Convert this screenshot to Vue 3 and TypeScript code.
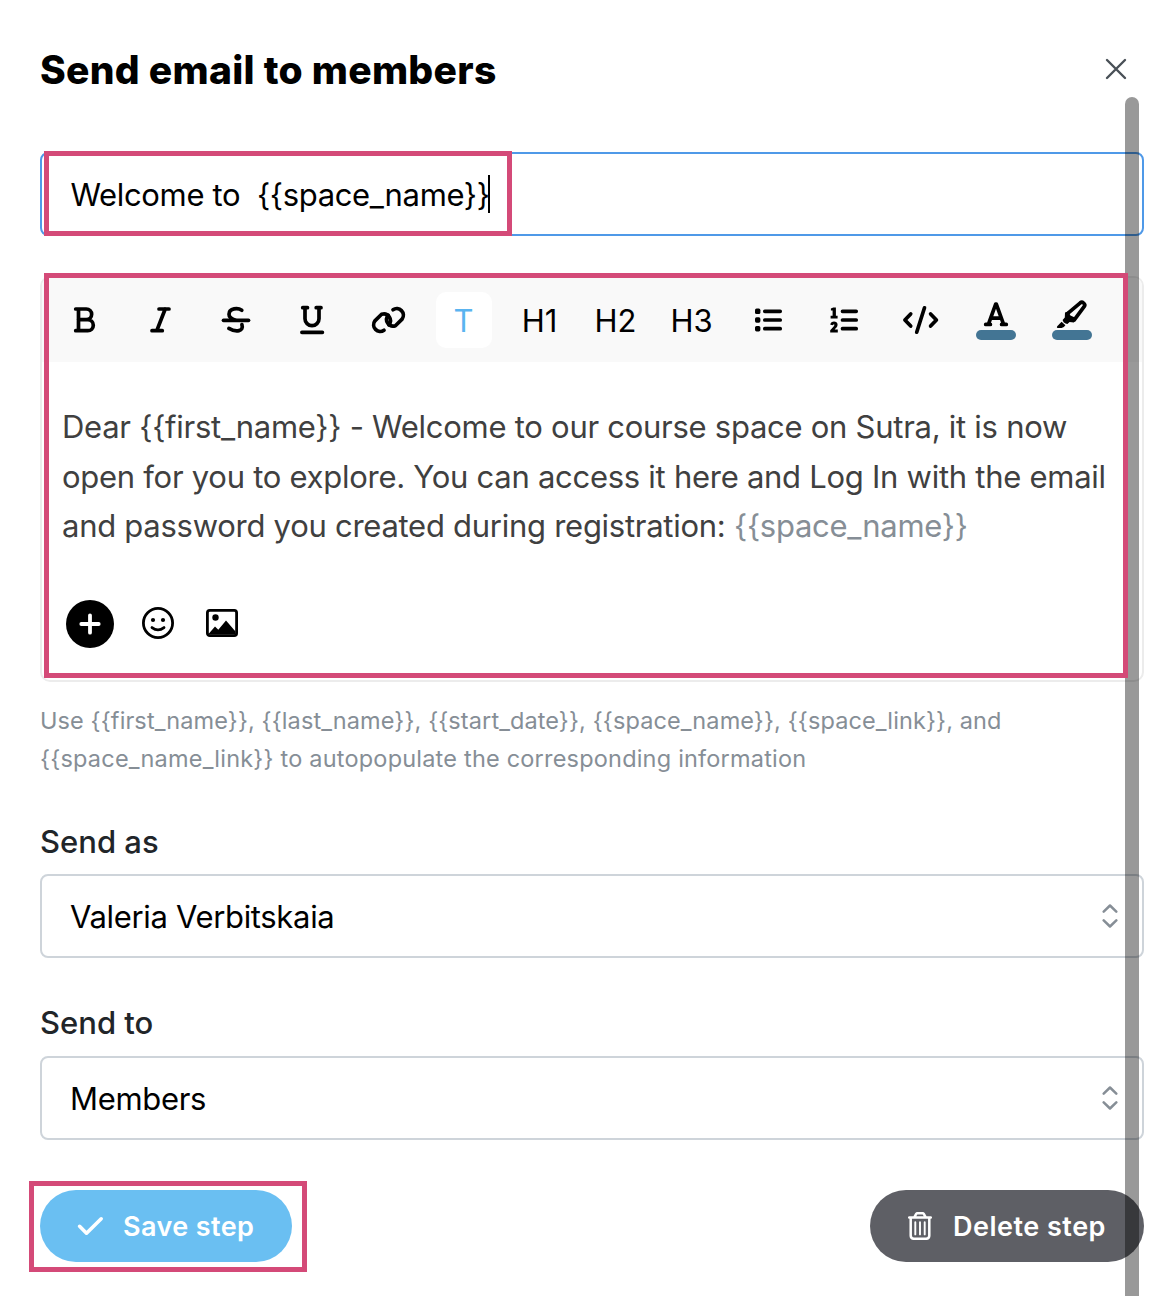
<template>
  <div class="modal">
    <header class="modal-header">
      <h1 class="title">Send email to members</h1>
      <button type="button" class="close-btn" aria-label="Close">
        <svg width="22" height="22" viewBox="0 0 22 22">
          <path d="M2 2L20 20M20 2L2 20" />
        </svg>
      </button>
    </header>

    <div class="subject">
      <span class="subject-text">{{ subject }}</span>
      <span class="caret"></span>
      <div class="frame frame-subject"></div>
    </div>

    <section class="editor">
      <div class="toolbar">
        <button
          v-for="tool in tools"
          :key="tool.name"
          type="button"
          class="tool"
          :class="{ active: tool.name === activeTool }"
          :aria-label="tool.name"
        >
          <span v-if="tool.label" class="tool-label">{{ tool.label }}</span>
          <svg v-else class="tool-icon" viewBox="0 0 56 56">
            <path v-for="(s, i) in tool.strokes" :key="'s' + i" :d="s" class="stroke" />
            <path v-for="(f, i) in tool.fills" :key="'f' + i" :d="f" class="fill" />
            <rect v-if="tool.swatch" class="swatch" x="8" y="38" width="40" height="10" rx="5" />
          </svg>
        </button>
      </div>

      <div class="content">
        <p v-for="(line, i) in bodyLines" :key="i" class="line">
          {{ line.text }}<span v-if="line.token" class="token">{{ line.token }}</span>
        </p>
      </div>

      <div class="insert">
        <button type="button" class="add-btn" aria-label="Add">
          <svg width="48" height="48" viewBox="0 0 48 48">
            <path d="M24 15.3V32.7M15.3 24H32.7" />
          </svg>
        </button>
        <svg class="insert-icon" width="32" height="32" viewBox="0 0 32 32">
          <circle class="ring" cx="16" cy="16" r="14.6" />
          <circle cx="11" cy="13" r="2.1" />
          <circle cx="21" cy="13" r="2.1" />
          <path class="ring" d="M10 20.6Q16 25.2 22 20.6" />
        </svg>
        <svg class="insert-icon" width="32" height="32" viewBox="0 0 32 32">
          <rect class="ring" x="1.4" y="3.4" width="29.2" height="25.2" rx="2.4" />
          <circle cx="9.5" cy="10.5" r="3.2" />
          <path d="M2.5 27L9 19.4L12.3 22.8L20 13.4L29.5 24.5V27.5H2.5Z" />
        </svg>
      </div>
      <div class="frame frame-editor"></div>
    </section>

    <div class="hint">
      <p v-for="(h, i) in hintLines" :key="i">{{ h }}</p>
    </div>

    <div v-for="field in fields" :key="field.label" class="field">
      <label class="field-label">{{ field.label }}</label>
      <div class="select">
        <span>{{ field.value }}</span>
        <svg width="16" height="24" viewBox="0 0 16 24">
          <path d="M1.7 7.6L8 1.5L14.3 7.6M1.7 16.4L8 22.5L14.3 16.4" />
        </svg>
      </div>
    </div>

    <footer class="actions">
      <button type="button" class="btn save">
        <svg width="28" height="24" viewBox="0 0 28 24">
          <path d="M3.6 12.3L10.5 19.2L25.2 4.8" stroke-width="3.6" />
        </svg>
        <span>Save step</span>
      </button>
      <button type="button" class="btn delete">
        <svg width="24" height="28" viewBox="0 0 24 28">
          <path d="M1.2 5.6H22.8M6.4 5.2L8.2 1.9Q8.6 1.2 9.4 1.2H14.6Q15.4 1.2 15.8 1.9L17.6 5.2M2.7 5.8V23.6Q2.7 26.8 5.9 26.8H18.1Q21.3 26.8 21.3 23.6V5.8" stroke-width="2.5" />
          <path d="M7.3 10.2V22.4M12 10.2V22.4M16.7 10.2V22.4" stroke-width="1.9" />
        </svg>
        <span>Delete step</span>
      </button>
      <div class="frame frame-save"></div>
    </footer>

    <div class="scrollbar"></div>
  </div>
</template>

<script setup lang="ts">
import { ref } from 'vue'

interface Tool {
  name: string
  label?: string
  strokes?: string[]
  fills?: string[]
  swatch?: boolean
}

const subject = ref('Welcome to  {{space_name}}')
const activeTool = ref('text')

const tools: Tool[] = [
  {
    name: 'bold',
    strokes: ['M19.7 17H30.3a5.35 5.35 0 0 1 0 10.7H22.3M30.3 27.7H31.8a5.5 5.5 0 0 1 0 11H19.7M22.5 17V38.7'],
  },
  { name: 'italic', strokes: ['M27 17H37M20 38.7H30.3M33.2 17L24.8 38.7'] },
  {
    name: 'strike',
    strokes: [
      'M33.8 18.2C30.2 15.8 21 15.8 21 22.2C21 25.2 23.6 27 27.4 28.2',
      'M33.9 32.6C36.2 39.4 28 40.6 20.9 36.4',
      'M15.5 28.3H40.5',
    ],
  },
  {
    name: 'underline',
    strokes: ['M18.7 15.7H23.5M32.2 15.7H37M21 15.7V26.7a7 7 0 0 0 14 0V15.7M17.9 40.3H38.4'],
  },
  {
    name: 'link',
    strokes: [
      'M24 38.2A6.6 6.6 0 0 1 14.9 28.9L21.6 22.3A6.6 6.6 0 0 1 28.8 32.8',
      'M33 17.8A6.6 6.6 0 0 1 42.1 27.1L35.4 33.7A6.6 6.6 0 0 1 28.2 23.2',
    ],
  },
  { name: 'text', label: 'T' },
  { name: 'heading1', label: 'H1' },
  { name: 'heading2', label: 'H2' },
  { name: 'heading3', label: 'H3' },
  {
    name: 'bullets',
    strokes: ['M24.8 19.3H40.2M24.8 28H40.2M24.8 36.7H40.2'],
    fills: [19.3, 28, 36.7].map(
      (y) => `M16.6 ${y - 2.7}h2.2a1.6 1.6 0 0 1 1.6 1.6v2.2a1.6 1.6 0 0 1 -1.6 1.6h-2.2a1.6 1.6 0 0 1 -1.6 -1.6v-2.2a1.6 1.6 0 0 1 1.6 -1.6z`
    ),
  },
  {
    name: 'numbers',
    strokes: ['M26.5 19.3H40.2M26.5 28H40.2M26.5 36.7H40.2'],
    fills: [
      'M14.9 16.6L17.2 15.4H19.9V23.8H21.6V26.4H14.6V23.8H16.6V18.6H14.9Z',
      'M14.3 32.8C14.5 28.4 21.6 28.4 21.6 32.7C21.6 34.9 19.6 36.2 18.6 37.5H21.8V40.4H14.2V38.2C16 35.9 18.4 34.2 18.4 32.9C18.4 31.8 17.2 31.9 17.1 33.2Z',
    ],
  },
  {
    name: 'code',
    strokes: ['M18.7 21.9L12.9 28L18.7 34.1M38.6 21.9L44.4 28L38.6 34.1M32.5 15.8L24.7 40.2'],
  },
  {
    name: 'color',
    strokes: ['M17.7 32.4H22.4M33.6 32.4H38.3M20.4 32.4L27.7 12.2H28.3L35.6 32.4M23 26.2H33'],
    swatch: true,
  },
  {
    name: 'highlight',
    strokes: ['M23.2 21.9L36.3 10.8Q37.8 9.6 39.4 10.9Q41.6 12.6 40.3 14.4L30.3 27.8'],
    fills: [
      'M21 20.6L24.4 19.4L26.4 23.4L32 26L31.6 28.4L29.8 30.4L25.6 30L23.4 32Q21.6 32 19.6 30.2L18.6 28L20.8 25.4Z',
      'M17.6 29.8L21.4 33.2Q19.5 36 17.6 36H13.6Q12.4 35.8 13.2 34.2Z',
    ],
    swatch: true,
  },
]

const bodyLines = [
  { text: 'Dear {{first_name}} - Welcome to our course space on Sutra, it is now', token: '' },
  { text: 'open for you to explore. You can access it here and Log In with the email', token: '' },
  { text: 'and password you created during registration: ', token: '{{space_name}}' },
]

const hintLines = [
  'Use {{first_name}}, {{last_name}}, {{start_date}}, {{space_name}}, {{space_link}}, and',
  '{{space_name_link}} to autopopulate the corresponding information',
]

const fields = [
  { label: 'Send as', value: 'Valeria Verbitskaia' },
  { label: 'Send to', value: 'Members' },
]
</script>

<style>
body {
  margin: 0;
  background: #fff;
}
</style>

<style scoped>
.modal {
  position: relative;
  box-sizing: border-box;
  width: 1176px;
  height: 1296px;
  padding: 39px 32px 0 40px;
  overflow: hidden;
  background: #fff;
  color: #000;
  font-family: Inter, 'Liberation Sans', sans-serif;
}

button {
  all: unset;
  box-sizing: border-box;
  cursor: pointer;
}

p {
  margin: 0;
}

svg {
  display: block;
  flex: none;
}

.modal-header {
  display: flex;
  align-items: center;
  justify-content: space-between;
  height: 60px;
  padding-right: 17px;
}

.title {
  margin: 0;
  font-size: 39px;
  font-weight: 800;
  letter-spacing: 0.29px;
  white-space: nowrap;
}

.close-btn path {
  fill: none;
  stroke: #495057;
  stroke-width: 2.4;
  stroke-linecap: round;
}

.subject {
  position: relative;
  display: flex;
  align-items: center;
  box-sizing: border-box;
  height: 84px;
  margin-top: 53px;
  padding-left: 28.5px;
  border: 2px solid #4f99e8;
  border-radius: 8px;
}

.subject-text {
  font-size: 31px;
  letter-spacing: -0.35px;
  white-space: pre;
}

.caret {
  width: 2px;
  height: 38px;
  margin-left: -2px;
  background: #000;
}

.frame {
  position: absolute;
  z-index: 3;
  box-sizing: border-box;
  border: 5px solid #d44a78;
  pointer-events: none;
}

.frame-subject {
  left: 2px;
  top: -3px;
  width: 468px;
  height: 85px;
}

.editor {
  position: relative;
  box-sizing: border-box;
  height: 406px;
  margin-top: 40px;
  border: 2px solid #ececec;
  border-radius: 10px;
}

.frame-editor {
  left: 2px;
  top: -5px;
  width: 1084px;
  height: 405px;
}

.toolbar {
  display: flex;
  gap: 20px;
  padding: 14px;
  border-radius: 8px 8px 0 0;
  background: #f9f9f9;
}

.tool {
  display: flex;
  align-items: center;
  justify-content: center;
  width: 56px;
  height: 56px;
  border-radius: 10px;
}

.tool.active {
  background: #fff;
  color: #5ab4f0;
}

.tool-label {
  padding: 2px 1px 0 0;
  font-size: 31px;
  line-height: 56px;
}

.tool-icon {
  width: 56px;
  height: 56px;
}

.stroke {
  fill: none;
  stroke: #000;
  stroke-width: 3.7;
  stroke-linecap: round;
  stroke-linejoin: round;
}

.swatch {
  fill: #437594;
}

.content {
  padding: 40px 20px 0;
}

.line {
  color: #404040;
  font-size: 31px;
  letter-spacing: -0.27px;
  line-height: 49.6px;
  white-space: pre;
}

.token {
  color: #868e96;
}

.insert {
  display: flex;
  align-items: center;
  gap: 32px;
  margin-top: 49px;
  padding-left: 24px;
}

.insert-icon {
  margin-bottom: 2px;
}

.add-btn {
  width: 48px;
  height: 48px;
  margin-right: -4px;
  border-radius: 50%;
  background: #000;
}

.add-btn path {
  stroke: #fff;
  stroke-width: 3.8;
  stroke-linecap: round;
}

.ring {
  fill: none;
  stroke: #000;
  stroke-width: 2.8;
  stroke-linecap: round;
}

.hint {
  margin-top: 20px;
  color: #868e96;
  font-size: 23.5px;
  letter-spacing: 0.1px;
  line-height: 38px;
  white-space: pre;
}

.hint p:last-child {
  letter-spacing: 0.2px;
}

.field {
  margin-top: 43px;
}

.hint + .field {
  margin-top: 42px;
}

.field-label {
  display: block;
  height: 55px;
  color: #212529;
  font-size: 31px;
  font-weight: 500;
  line-height: 43px;
}

.hint + .field .field-label {
  height: 54px;
}

.select {
  display: flex;
  align-items: center;
  justify-content: space-between;
  box-sizing: border-box;
  height: 84px;
  padding: 0 24px 0 28px;
  border: 2px solid #ced4da;
  border-radius: 8px;
  font-size: 31px;
  letter-spacing: -0.33px;
}

.select path {
  fill: none;
  stroke: #868e96;
  stroke-width: 2.5;
  stroke-linecap: round;
  stroke-linejoin: round;
}

.actions {
  position: relative;
  display: flex;
  justify-content: space-between;
  margin-top: 50px;
}

.frame-save {
  left: -11px;
  top: -9px;
  width: 278px;
  height: 91px;
}

.btn {
  display: flex;
  align-items: center;
  height: 72px;
  border-radius: 36px;
  color: #fff;
  font-size: 27px;
  font-weight: 600;
  letter-spacing: 0.4px;
  white-space: nowrap;
}

.btn path {
  fill: none;
  stroke: #fff;
  stroke-linecap: round;
  stroke-linejoin: round;
}

.save {
  gap: 19px;
  width: 252px;
  padding-left: 36px;
  background: #6abff2;
}

.delete {
  gap: 21px;
  width: 274px;
  padding-left: 38px;
  background: #5e5f65;
  letter-spacing: 0.5px;
}

.scrollbar {
  position: absolute;
  z-index: 2;
  top: 97px;
  right: 37px;
  bottom: 0;
  width: 14px;
  border-radius: 7px 7px 0 0;
  background: rgba(0, 0, 0, 0.4);
}
</style>
